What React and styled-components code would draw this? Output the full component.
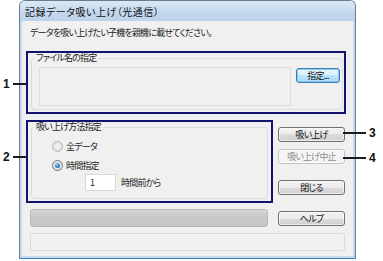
import styled, { createGlobalStyle } from 'styled-components'

const GlobalStyle = createGlobalStyle`
  html, body { margin:0; padding:0; background:#fff; }
  body {
    font-family:"Noto Sans CJK JP", "Noto Sans", sans-serif;
    font-size:9px;
    letter-spacing:-0.8px;
    color:#222;
    font-feature-settings:"palt";
  }
`

const Page = styled.div`
  position:relative;
  width:383px;
  height:261px;
  padding-left:19px;
  box-sizing:border-box;
`

const Window = styled.div`
  width:337px;
  height:259px;
  box-sizing:border-box;
  border:1px solid #6f7b88;
  border-bottom-color:#3f86b8;
  border-radius:6px 6px 0 0;
  background:#c4d9ee;
  padding:0 2px 2px 2px;
  display:flex;
  flex-direction:column;
`

const TitleBar = styled.div`
  height:20px;
  display:flex;
  align-items:center;
  font-size:10px;
  letter-spacing:0.5px;
  color:#111;
  background:linear-gradient(#dbe8f5, #c3d8ee 60%, #bcd3ea);
  margin:0 -2px;
  padding-left:5px;
  border-radius:5px 5px 0 0;
`

const Body = styled.div`
  flex:1;
  background:#f0f0f0;
  padding:6px 0 0 4px;
  display:flex;
  flex-direction:column;
`

const Instruction = styled.div`
  margin-left:4px;
  line-height:12px;
  height:12px;
`

const Highlight = styled.div`
  box-sizing:border-box;
  width:${p => p.w}px;
  height:${p => p.h}px;
  border:2px solid #13136f;
  padding:0 0 0 3px;
  margin-top:${p => p.mt || 0}px;
`

const GroupBox = styled.fieldset`
  margin:0;
  box-sizing:border-box;
  width:${p => p.w}px;
  height:${p => p.h}px;
  border:1px solid #d5dfe5;
  border-radius:3px;
  padding:${p => p.pad};
  min-width:0;
`

const Legend = styled.legend`
  padding:0 2px;
  margin-left:${p => p.shift || 2}px;
  line-height:10px;
`

const Row = styled.div`
  display:flex;
  align-items:${p => p.align || 'flex-start'};
  margin-top:${p => p.mt || 0}px;
`

const FileBox = styled.div`
  width:252px;
  height:39px;
  box-sizing:border-box;
  border:1px solid #dcdcdc;
  background:#f0f0f0;
`

const Button = styled.button`
  width:${p => p.w || 67}px;
  height:15px;
  box-sizing:border-box;
  padding:0;
  margin:0 0 0 ${p => p.ml || 0}px;
  margin-top:${p => p.mt || 0}px;
  border:1px solid ${p => p.primary ? '#3c7fb1' : p.disabled ? '#c2c6c9' : '#707070'};
  border-radius:3px;
  background:${p => p.primary
    ? 'linear-gradient(#eaf6fd, #d9f0fc 50%, #bee6fd 50%, #a7d9f5)'
    : p.disabled
      ? '#f4f4f4'
      : 'linear-gradient(#f2f2f2, #ebebeb 50%, #dddddd 50%, #cfcfcf)'};
  box-shadow:${p => p.primary ? 'inset 0 0 0 1px #88c9ef' : 'inset 0 0 0 1px rgba(255,255,255,0.6)'};
  font-family:"Noto Sans CJK JP", "Noto Sans", sans-serif;
  font-feature-settings:"palt";
  font-size:9px;
  letter-spacing:-0.8px;
  line-height:13px;
  color:${p => p.disabled ? '#8d8d8d' : '#111'};
`

const ButtonColumn = styled.div`
  display:flex;
  flex-direction:column;
  margin-left:5px;
  padding-top:7px;
`

const RadioRow = styled.div`
  display:flex;
  align-items:center;
  height:14px;
  margin-top:${p => p.mt}px;
  margin-left:20px;
  gap:3px;
`

const RadioMark = styled.span`
  width:11px;
  height:11px;
  box-sizing:border-box;
  border-radius:50%;
  border:1px solid ${p => p.checked ? '#6d7a86' : '#b3b7ba'};
  background:radial-gradient(circle, #f6f6f6 0%, #e2e2e2 60%, #cfcfcf 100%);
  display:flex;
  align-items:center;
  justify-content:center;
  &::after{
    content:'';
    display:${p => p.checked ? 'block' : 'none'};
    width:5px;
    height:5px;
    border-radius:50%;
    background:radial-gradient(circle at 40% 35%, #8fd2f5, #1c6fb6 70%);
  }
`

const HoursRow = styled.div`
  display:flex;
  align-items:center;
  margin-top:2px;
  margin-left:53px;
`

const NumberInput = styled.div`
  width:31px;
  height:17px;
  box-sizing:border-box;
  border:1px solid #d7dadd;
  background:#fff;
  padding-left:4px;
  line-height:15px;
`

const Caption = styled.span`
  margin-left:5px;
`

const Progress = styled.div`
  width:238px;
  height:18px;
  margin-left:4px;
  box-sizing:border-box;
  border:1px solid #b8b8b8;
  border-radius:3px;
  background:linear-gradient(#d8d8d8, #c9c9c9 40%, #c6c6c6);
`

const StatusBar = styled.div`
  width:315px;
  height:18px;
  margin-left:4px;
  box-sizing:border-box;
  border:1px solid #dadada;
  border-radius:2px;
  background:#f0f0f0;
`

const Callout = styled.div`
  position:absolute;
  top:${p => p.y - 7}px;
  left:${p => p.x}px;
  display:flex;
  align-items:center;
  flex-direction:${p => p.right ? 'row' : 'row-reverse'};
  height:14px;
  gap:3px;
`

const CalloutLine = styled.span`
  width:${p => p.len}px;
  height:2px;
  background:#1a1a2a;
`

const CalloutNum = styled.span`
  font-family:"Liberation Sans", Arial, sans-serif;
  font-weight:bold;
  font-size:12px;
  letter-spacing:0;
  color:#111;
`

function Radio({ checked, children, mt }) {
  return (
    <RadioRow mt={mt}>
      <RadioMark checked={checked} />
      <span>{children}</span>
    </RadioRow>
  )
}

export default function App() {
  return (
    <Page>
      <GlobalStyle />
      <Window>
        <TitleBar>記録データ吸い上げ（光通信）</TitleBar>
        <Body>
          <Instruction>データを吸い上げたい子機を親機に載せてください。</Instruction>

          <Highlight w={320} h={63} mt={12}>
            <GroupBox w={312} h={57} pad="4px 0 0 7px">
              <Legend shift={-5}>ファイル名の指定</Legend>
              <Row>
                <FileBox />
                <Button primary w={44} ml={5} mt={1}>指定...</Button>
              </Row>
            </GroupBox>
          </Highlight>

          <Row mt={6}>
            <Highlight w={247} h={83}>
              <GroupBox w={237} h={77} pad="0">
                <Legend>吸い上げ方法指定</Legend>
                <Radio mt={7}>全データ</Radio>
                <Radio checked mt={5}>時間指定</Radio>
                <HoursRow>
                  <NumberInput>1</NumberInput>
                  <Caption>時間前から</Caption>
                </HoursRow>
              </GroupBox>
            </Highlight>
            <ButtonColumn>
              <Button>吸い上げ</Button>
              <Button disabled mt={7}>吸い上げ中止</Button>
              <Button mt={16}>閉じる</Button>
            </ButtonColumn>
          </Row>

          <Row mt={6} align="center">
            <Progress />
            <Button ml={10}>ヘルプ</Button>
          </Row>

          <Row mt={6}>
            <StatusBar />
          </Row>
        </Body>
      </Window>

      <Callout x={3} y={84}>
        <CalloutLine len={13} />
        <CalloutNum>1</CalloutNum>
      </Callout>
      <Callout x={3} y={157}>
        <CalloutLine len={15} />
        <CalloutNum>2</CalloutNum>
      </Callout>
      <Callout right x={343} y={133}>
        <CalloutLine len={23} />
        <CalloutNum>3</CalloutNum>
      </Callout>
      <Callout right x={343} y={158}>
        <CalloutLine len={23} />
        <CalloutNum>4</CalloutNum>
      </Callout>
    </Page>
  )
}
